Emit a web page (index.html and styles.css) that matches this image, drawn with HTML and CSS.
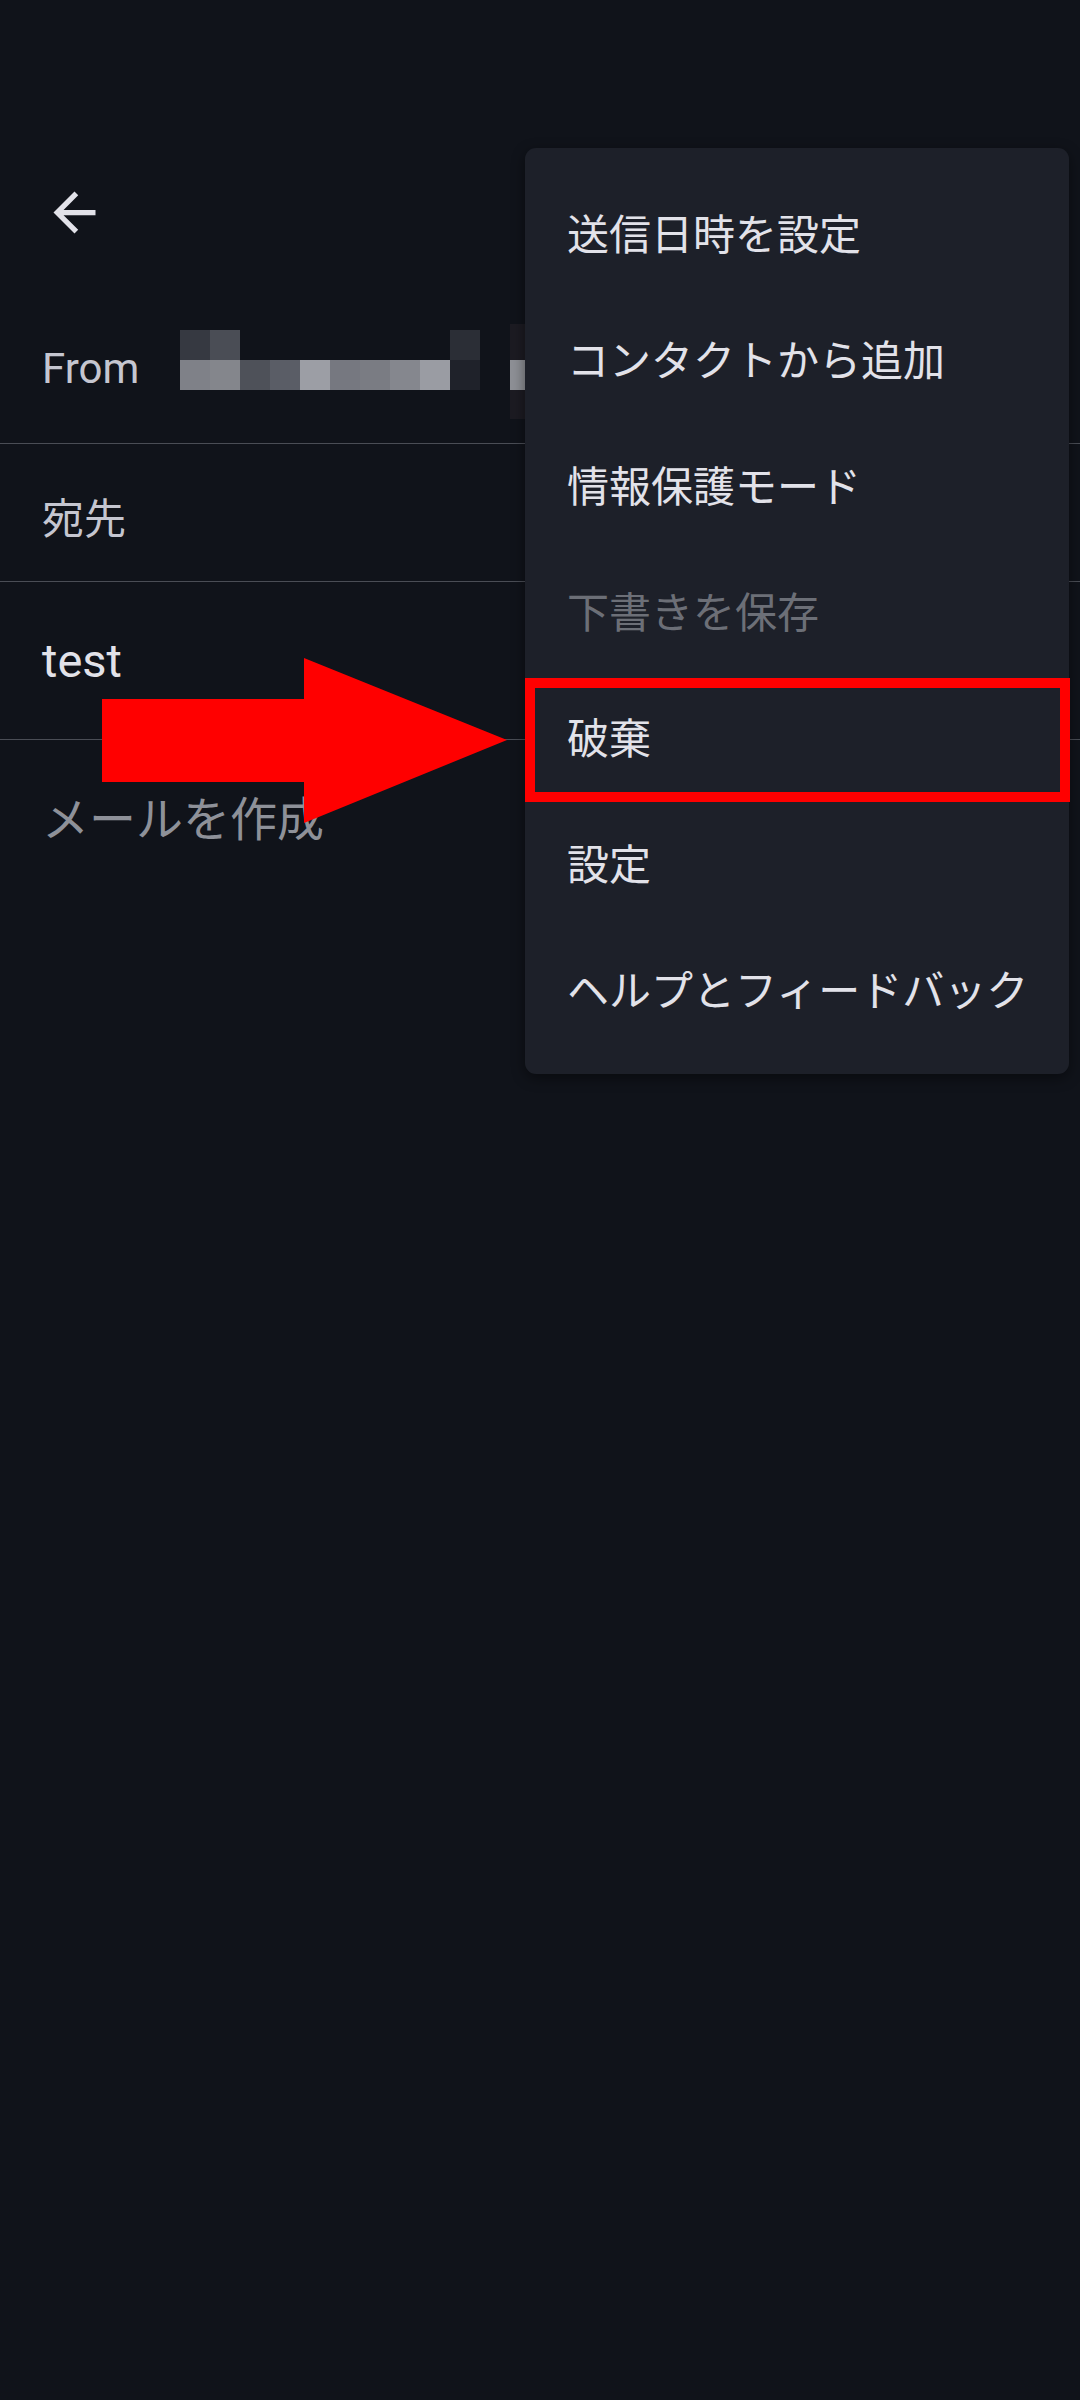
FILE: index.html
```html
<!DOCTYPE html>
<html lang="ja">
<head>
<meta charset="utf-8">
<title>メールを作成</title>
<link rel="stylesheet" href="styles.css">
</head>
<body>
<div class="screen">
  <div class="statusbar"></div>
  <header class="toolbar">
    <svg class="back-icon" viewBox="0 0 24 24" width="63" height="63" aria-label="戻る">
      <path d="M20 11H7.83l5.59-5.59L12 4l-8 8 8 8 1.41-1.41L7.83 13H20v-2z" fill="#e2e2e9"/>
    </svg>
  </header>

  <div class="row from-row">
    <span class="label from-label">From</span>
    <div class="redact">
      <i class="c11"></i><i class="c12"></i><i></i><i></i><i></i><i></i><i></i><i></i><i></i><i class="c1a"></i>
      <i class="c21"></i><i class="c22"></i><i class="c23"></i><i class="c24"></i><i class="c25"></i><i class="c26"></i><i class="c27"></i><i class="c28"></i><i class="c29"></i><i class="c2a"></i>
    </div>
    <div class="redact-edge"><span></span></div>
  </div>

  <div class="row to-row">
    <span class="label">宛先</span>
  </div>

  <div class="row subject-row">
    <span class="subject">test</span>
  </div>

  <div class="body-field">
    <span class="placeholder">メールを作成</span>
  </div>

  <ul class="menu">
    <li class="menu-item">送信日時を設定</li>
    <li class="menu-item">コンタクトから追加</li>
    <li class="menu-item">情報保護モード</li>
    <li class="menu-item disabled">下書きを保存</li>
    <li class="menu-item marked">破棄<span class="highlight"></span></li>
    <li class="menu-item">設定</li>
    <li class="menu-item">ヘルプとフィードバック</li>
  </ul>

  <svg class="annot-arrow" viewBox="0 0 405 165" width="405" height="165">
    <polygon points="0,41 202,41 202,0 405,82 202,165 202,124 0,124" fill="#ff0000"/>
  </svg>
</div>
</body>
</html>
```

FILE: styles.css
```css
html, body {
  margin: 0;
  padding: 0;
  background: #10131a;
}

body {
  font-family: Roboto, "Noto Sans CJK JP", sans-serif;
  color: #e2e2e9;
}

.screen {
  position: relative;
  width: 1080px;
  height: 2400px;
  overflow: hidden;
  background: #10131a;
}

.statusbar {
  height: 148px;
}

.toolbar {
  height: 128px;
  display: flex;
  align-items: center;
  padding-left: 43px;
}

.back-icon {
  display: block;
}

.row {
  box-sizing: border-box;
  display: flex;
  align-items: flex-start;
  padding-left: 42px;
  border-bottom: 1px solid #4a4d55;
}

.label {
  font-size: 42px;
  line-height: 50px;
  color: #c5c6d0;
}

.from-row {
  height: 168px;
}

.from-label {
  width: 138px;
  margin-top: 68px;
}

.redact {
  margin-top: 54px;
  display: grid;
  grid-template-columns: repeat(10, 30px);
  grid-template-rows: repeat(2, 30px);
}

.redact i {
  display: block;
}

.c11 { background: #363941; }
.c12 { background: #4a4d55; }
.c1a { background: #2b2e36; }
.c21 { background: #7f8188; }
.c22 { background: #84868c; }
.c23 { background: #4e5159; }
.c24 { background: #5a5d66; }
.c25 { background: #9c9ea5; }
.c26 { background: #767880; }
.c27 { background: #7a7c83; }
.c28 { background: #85878e; }
.c29 { background: #9a9ca3; }
.c2a { background: #1f222a; }

.redact-edge {
  margin-left: 30px;
  margin-top: 48px;
  width: 16px;
  height: 95px;
  background: #1c1b22;
  display: flex;
  flex-direction: column;
}

.redact-edge span {
  margin-top: 36px;
  height: 30px;
  background: #8e9096;
}

.to-row {
  height: 138px;
  padding-top: 51px;
}

.subject-row {
  height: 158px;
  padding-top: 51px;
}

.subject {
  font-size: 47px;
  line-height: 56px;
  color: #e2e2e9;
}

.body-field {
  padding: 52px 0 0 42px;
}

.placeholder {
  font-size: 47px;
  line-height: 56px;
  color: #8e9199;
}

.menu {
  position: absolute;
  left: 525px;
  top: 148px;
  width: 544px;
  margin: 0;
  padding: 22px 0;
  list-style: none;
  background: #1d2029;
  border-radius: 11px;
  box-shadow: 0 4px 14px rgba(0, 0, 0, 0.45);
}

.menu-item {
  position: relative;
  box-sizing: border-box;
  height: 126px;
  display: flex;
  align-items: center;
  padding: 6px 0 0 42px;
  font-size: 42px;
  line-height: 50px;
  color: #e2e2e9;
}

.menu-item.disabled {
  color: #6c6f77;
}

.highlight {
  position: absolute;
  top: 4px;
  bottom: -2px;
  left: 0;
  right: -1px;
  border: 10px solid #ff0000;
}

.annot-arrow {
  position: absolute;
  left: 102px;
  top: 658px;
  display: block;
}
```
